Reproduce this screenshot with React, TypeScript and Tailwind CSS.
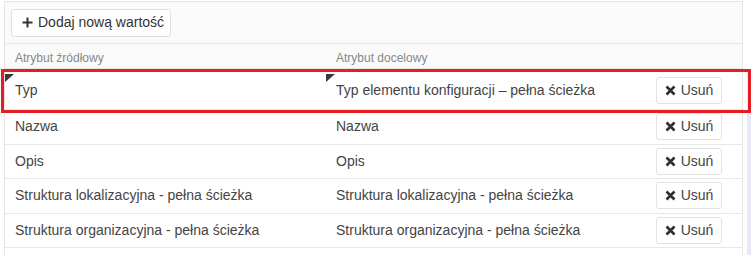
const rows: { src: string; dst: string; dirty?: boolean }[] = [
  { src: 'Typ', dst: 'Typ elementu konfiguracji – pełna ścieżka', dirty: true },
  { src: 'Nazwa', dst: 'Nazwa' },
  { src: 'Opis', dst: 'Opis' },
  { src: 'Struktura lokalizacyjna - pełna ścieżka', dst: 'Struktura lokalizacyjna - pełna ścieżka' },
  { src: 'Struktura organizacyjna - pełna ścieżka', dst: 'Struktura organizacyjna - pełna ścieżka' },
]

function DirtyMark() {
  return (
    <svg className="absolute left-0 top-[3px]" width="9" height="8" viewBox="0 0 9 8">
      <polygon points="0,0 9,0 0,8" fill="#3a3a3a" />
    </svg>
  )
}

function RemoveButton() {
  return (
    <button className="flex h-[27px] w-[66px] items-center justify-center gap-[5px] rounded-[3px] border border-[#e2e2e2] bg-white text-[14px] text-[#444]">
      <svg className="shrink-0" width="11" height="11" viewBox="0 0 11 11">
        <path d="M1.5 1.5 L9.5 9.5 M9.5 1.5 L1.5 9.5" stroke="#2f2f2f" strokeWidth="2.6" />
      </svg>
      Usuń
    </button>
  )
}

export default function App() {
  return (
    <div className="relative h-[255px] w-[753px] overflow-hidden bg-white font-['Liberation_Sans',Arial,sans-serif] text-[14px] text-[#444]">
      <div className="flex">
        <div className="ml-[4px] mt-[1px] w-[739px] border-x border-t border-[#e6e6e6]">
          <div className="flex h-[42px] items-center border-b border-[#e6e6e6] bg-[#fafafa] px-[6px]">
            <button className="flex h-[28px] items-center gap-[5px] rounded-[3px] border border-[#e0e0e0] bg-white pl-[10px] pr-[6px] text-[14px] text-[#333]">
              <svg className="shrink-0" width="11" height="11" viewBox="0 0 11 11">
                <path d="M5.5 0.5 V10.5 M0.5 5.5 H10.5" stroke="#333" strokeWidth="2" />
              </svg>
              Dodaj nową wartość
            </button>
          </div>
          <div className="flex h-[25px] items-center border-b border-[#e6e6e6] bg-[#fafafa] text-[12px] text-[#888]">
            <div className="w-[321px] pl-[10px] pt-[4px]">Atrybut źródłowy</div>
            <div className="w-[319px] pl-[10px] pt-[4px]">Atrybut docelowy</div>
            <div className="flex-1" />
          </div>
          {rows.map((r, i) => (
            <div
              key={r.src}
              className={`flex items-center border-b border-[#e8e8e8] bg-white ${i === 0 ? 'h-[41px] pt-[2px]' : 'h-[34.5px]'}`}
            >
              <div className="relative flex h-full w-[321px] items-center pl-[10px]">
                {r.dirty && <DirtyMark />}
                {r.src}
              </div>
              <div className="relative flex h-full w-[319px] items-center pl-[10px]">
                {r.dirty && <DirtyMark />}
                {r.dst}
              </div>
              <div className="flex flex-1 items-center pl-[11px]">
                <RemoveButton />
              </div>
            </div>
          ))}
          <div className="h-[20px] bg-white" />
        </div>
        <div className="ml-[4px] mt-[72px] h-[200px] w-[4px] bg-[#e6eaf8]" />
      </div>
      <div className="absolute left-[1px] top-[69px] h-[44px] w-[750px] border-[3px] border-[#e41e25]" />
    </div>
  )
}
